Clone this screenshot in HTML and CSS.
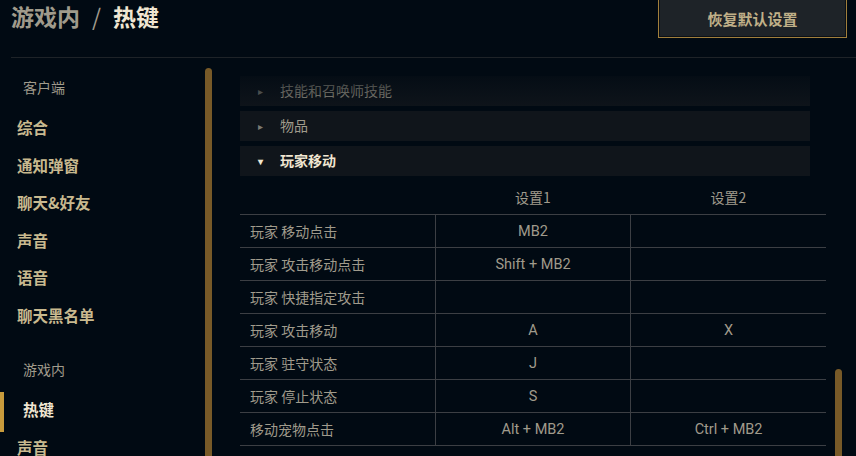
FILE: index.html
```html
<!DOCTYPE html>
<html lang="zh-CN">
<head>
    <meta charset="UTF-8">
    <title>热键</title>
    <link rel="stylesheet" href="styles.css">
</head>
<body>
    <header class="top">
        <h1 class="crumbs"><span class="crumb-parent">游戏内</span><span class="crumb-sep">/</span><span class="crumb-current">热键</span></h1>
        <button class="reset-btn">恢复默认设置</button>
    </header>

    <main class="main">
        <nav class="sidebar">
            <div class="nav-list">
                <div class="nav-group">客户端</div>
                <a class="nav-item">综合</a>
                <a class="nav-item">通知弹窗</a>
                <a class="nav-item">聊天&amp;好友</a>
                <a class="nav-item">声音</a>
                <a class="nav-item">语音</a>
                <a class="nav-item">聊天黑名单</a>
                <div class="nav-group spaced">游戏内</div>
                <a class="nav-item active">热键</a>
                <a class="nav-item">声音</a>
            </div>
            <div class="nav-scroll"></div>
        </nav>

        <section class="content">
            <div class="sections">
                <div class="section-row"><span class="arrow">&#9656;</span>技能和召唤师技能</div>
                <div class="section-row"><span class="arrow">&#9656;</span>物品</div>
                <div class="section-row open"><span class="arrow">&#9662;</span>玩家移动</div>
            </div>

            <table class="keys">
                <thead>
                    <tr><th></th><th>设置1</th><th>设置2</th></tr>
                </thead>
                <tbody>
                    <tr><td>玩家 移动点击</td><td class="key">MB2</td><td class="key"></td></tr>
                    <tr><td>玩家 攻击移动点击</td><td class="key">Shift + MB2</td><td class="key"></td></tr>
                    <tr><td>玩家 快捷指定攻击</td><td class="key"></td><td class="key"></td></tr>
                    <tr><td>玩家 攻击移动</td><td class="key">A</td><td class="key">X</td></tr>
                    <tr><td>玩家 驻守状态</td><td class="key">J</td><td class="key"></td></tr>
                    <tr><td>玩家 停止状态</td><td class="key">S</td><td class="key"></td></tr>
                    <tr><td>移动宠物点击</td><td class="key">Alt + MB2</td><td class="key">Ctrl + MB2</td></tr>
                </tbody>
            </table>

            <div class="fade"></div>
            <div class="content-scroll"></div>
        </section>
    </main>
</body>
</html>
```

FILE: styles.css
```css
body {
    margin: 0;
    width: 856px;
    height: 456px;
    overflow: hidden;
    background: #010a13;
    font-family: "Noto Sans CJK SC", "Noto Sans", sans-serif;
    color: #a09b8c;
}

/* ===== header ===== */
.top {
    display: flex;
    justify-content: space-between;
    align-items: flex-start;
    height: 57px;
    margin-left: 11px;
    border-bottom: 1px solid #1e2328;
}
.crumbs {
    margin: 0;
    font-size: 23px;
    line-height: 32px;
    font-weight: bold;
    display: flex;
    gap: 12px;
}
.crumb-parent { color: #a09b8c; }
.crumb-sep { color: #a09b8c; font-weight: normal; }
.crumb-current { color: #f0e6d2; }

.reset-btn {
    margin: -3px 9px 0 0;
    width: 189px;
    height: 41px;
    padding-top: 3px;
    background: #1e2328;
    border: 1px solid #a17f3c;
    color: #c0b088;
    font-family: "Noto Sans CJK SC", sans-serif;
    font-size: 15px;
    font-weight: bold;
    box-shadow: inset 0 0 0 1px #0b1016;
}

/* ===== layout ===== */
.main {
    display: flex;
    height: 398px;
}

/* ===== sidebar ===== */
.sidebar {
    display: flex;
    width: 240px;
    flex-shrink: 0;
}
.nav-list {
    width: 205px;
    display: flex;
    flex-direction: column;
    padding-top: 19px;
}
.nav-group {
    height: 20px;
    line-height: 20px;
    padding-left: 23px;
    font-size: 14px;
    color: #a09b8c;
    margin-bottom: 12px;
}
.nav-group.spaced {
    margin-top: 25px;
}
.nav-item {
    height: 37.5px;
    line-height: 37.5px;
    padding-left: 17px;
    font-size: 15.5px;
    font-weight: bold;
    color: #c8b98f;
    flex-shrink: 0;
}
.nav-item.active {
    position: relative;
    padding-left: 23px;
    color: #f0e6d2;
}
.nav-item.active::before {
    content: "";
    position: absolute;
    left: 0;
    top: 1px;
    width: 4px;
    height: 40px;
    background: #c89b3c;
}
.nav-scroll {
    width: 7px;
    margin-top: 10px;
    background: #785a28;
    border-radius: 4px 4px 0 0;
}

/* ===== content ===== */
.content {
    position: relative;
    flex: 1;
    padding-top: 18px;
}
.sections {
    display: flex;
    flex-direction: column;
    gap: 5px;
    width: 570px;
}
.section-row {
    height: 30px;
    line-height: 29px;
    background: #10151b;
    font-size: 14px;
    color: #a09b8c;
    display: flex;
}
.section-row .arrow {
    width: 40px;
    text-align: center;
    font-size: 10px;
    color: #7b7a73;
}
.section-row.open {
    color: #f0e6d2;
    font-weight: bold;
}
.section-row.open .arrow {
    color: #f0e6d2;
}

.keys {
    width: 586px;
    border-collapse: collapse;
    table-layout: fixed;
    font-size: 14px;
}
.keys th {
    height: 34px;
    padding: 4px 0 0;
    font-weight: normal;
    color: #a09b8c;
    border-bottom: 1px solid #3c3f44;
}
.keys td {
    height: 32px;
    padding: 0;
    border-bottom: 1px solid #3c3f44;
    color: #a09b8c;
}
.keys td:first-child {
    padding-left: 10px;
}
.keys td + td {
    border-left: 1px solid #3c3f44;
}
.keys .key {
    text-align: center;
    font-family: Roboto, "Noto Sans", sans-serif;
    font-size: 14.5px;
}

.fade {
    position: absolute;
    left: 0;
    top: 0;
    width: 600px;
    height: 48px;
    background: linear-gradient(#010a13 15%, rgba(1, 10, 19, 0.1));
}
.content-scroll {
    position: absolute;
    left: 595px;
    top: 311px;
    width: 7px;
    bottom: 0;
    background: #785a28;
    border-radius: 4px 4px 0 0;
}
```
